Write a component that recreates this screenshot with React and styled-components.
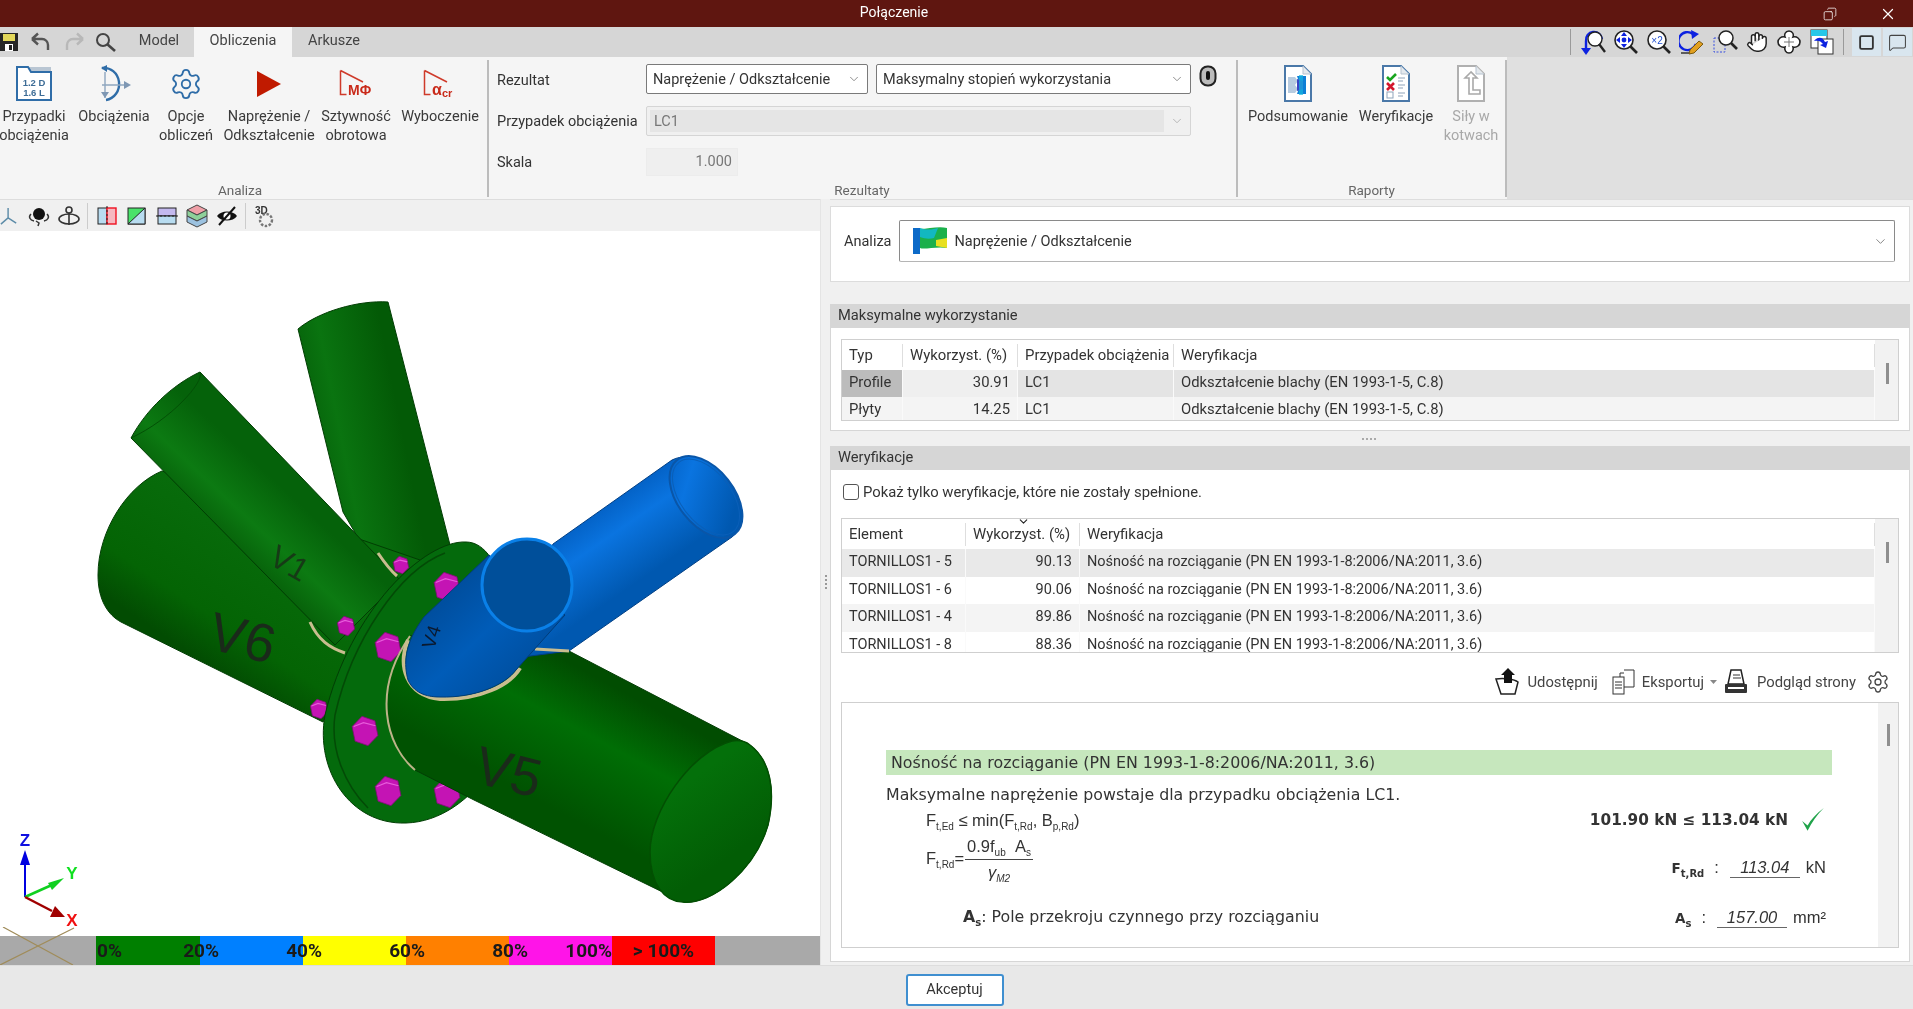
import React from 'react';
import styled, { createGlobalStyle } from 'styled-components';
import { ChevronDown, Settings, Hand, Copy, X, MessageSquare, Square } from 'lucide-react';

const Global = createGlobalStyle`
  html, body { margin: 0; padding: 0; overflow: hidden; background: #e8e8e8; }
  * { box-sizing: border-box; }
`;
const Page = styled.div`
  width: 1913px; height: 1009px; display: flex; flex-direction: column; overflow: hidden;
  font-family: Roboto, "Open Sans", sans-serif; font-size: 14.5px; color: #333; background: #e8e8e8;
  filter: blur(0.3px);
`;
const TitleBar = styled.header`
  height: 27px; flex: none; background: #5f1610; color: #fff; position: relative;
  display: flex; align-items: center; justify-content: center; padding: 0 125px 4px 0; font-size: 14px;
`;
const WindowButtons = styled.div`
  position: absolute; right: 16px; top: 0; height: 27px; display: flex; align-items: center; gap: 42px;
`;
const TabRow = styled.nav`
  height: 30px; flex: none; background: #d6d6d6; display: flex; align-items: stretch; padding-right: 0;
`;
const QuickBtn = styled.span`
  width: ${p => p.$w}px; display: flex; align-items: center; justify-content: center; flex: none;
`;
const Tab = styled.div`
  width: ${p => p.$w}px; display: flex; align-items: center; justify-content: center; flex: none; padding-bottom: 4px;
  background: ${p => p.$active ? '#f5f5f5' : 'transparent'}; font-size: 14.5px; color: #444;
`;
const TabSpacer = styled.div` flex: 1; `;
const ToolDivider = styled.span`
  width: 1px; margin: 2px 0; background: #9a9a9a; flex: none;
`;
const ToggleBtn = styled.span`
  width: 29px; margin: 1px 1px; background: #d9e6ef; display: flex; align-items: center; justify-content: center; flex: none;
`;
const RibbonBand = styled.div`
  height: 142px; flex: none; background: #e0e0e0; display: flex;
`;
const Ribbon = styled.section`
  width: 1507px; background: #f5f5f5; display: flex; padding: 3px 0 2px;
`;
const RibbonGroup = styled.div`
  width: ${p => p.$w}px; flex: none; display: flex; flex-direction: column; border-right: 2px solid #bcbcbc;
`;
const GroupBody = styled.div`
  flex: 1; display: flex; padding-left: ${p => p.$pl || 0}px;
`;
const GroupBodyColumn = styled.div`
  flex: 1; display: flex; flex-direction: column; padding: 4px 0 0 8px;
`;
const GroupLabel = styled.div`
  height: 16px; line-height: 19px; text-align: center; font-size: 13.5px; color: #666;
  padding-right: ${p => p.$pr || 0}px;
`;
const RibbonBtn = styled.div`
  width: ${p => p.$w}px; margin-left: ${p => p.$ml || 0}px; flex: none; display: flex; flex-direction: column; align-items: center;
  color: ${p => p.$off ? '#a8a8a8' : '#3a3a3a'}; white-space: nowrap; text-align: center; line-height: 19px;
`;
const IconSlot = styled.div`
  height: 37px; margin-top: 5px; margin-bottom: 5px; display: flex; align-items: center; justify-content: center;
`;
const FieldRow = styled.div`
  display: flex; align-items: center; margin-bottom: ${p => p.$mb}px; height: ${p => p.$h}px;
`;
const FieldLabel = styled.div`
  width: 149px; flex: none; color: #333; padding-top: ${p => p.$pt || 0}px;
`;
const Combo = styled.div`
  width: ${p => p.$w}px; margin-left: ${p => p.$ml || 0}px; height: 100%; border: 1px solid ${p => p.$off ? '#d5d5d5' : '#7a7a7a'}; border-radius: 2px;
  background: ${p => p.$off ? '#f0f0f0' : '#fff'}; color: ${p => p.$off ? '#777' : '#333'}; display: flex; align-items: center; flex: none;
  padding: ${p => p.$off ? '3px 6px 3px 3px' : '0 6px'}; justify-content: space-between;
`;
const ComboFill = styled.div`
  flex: 1; height: 100%; background: #e5e5e5; display: flex; align-items: center; padding-left: 4px; margin-right: 6px;
`;
const ScaleInput = styled.div`
  width: 92px; height: 28px; border: 1px solid #ececec; background: #efefef; color: #777; text-align: right;
  padding: 3px 5px; line-height: 20px;
`;
const Pin = styled.span` margin-left: 8px; margin-top: -6px; display: flex; `;

const Main = styled.main`
  flex: 1; display: flex; min-height: 0;
`;
const LeftPane = styled.div`
  width: 820px; flex: none; display: flex; flex-direction: column; background: #fff;
`;
const ViewToolbar = styled.div`
  height: 32px; flex: none; background: #f0f0f0; border-top: 1px solid #ddd; display: flex; align-items: center;
`;
const ViewTool = styled.span`
  width: ${p => p.$w || 30}px; margin-left: ${p => p.$ml || 0}px; display: flex; justify-content: center; flex: none;
`;
const ToolSep = styled.span`
  width: 1px; height: 26px; background: #ccc; margin: 0 3px; flex: none;
`;
const Viewport = styled.div`
  flex: 1; background: #fff; min-height: 0;
`;
const ModelSvg = styled.svg`
  display: block;
`;
const Legend = styled.div`
  height: 29px; flex: none; display: flex; background: #a9a9a9; position: relative; font-weight: 700; font-size: 19px; color: #1a1a1a;
`;
const LegendCross = styled.svg`
  position: absolute; left: 0; top: -9px;
`;
const LegendSeg = styled.div`
  width: ${p => p.$w}px; flex: none; background: ${p => p.$c}; position: relative; display: flex; align-items: center; line-height: 29px;
`;
const LegendStart = styled.span`
  padding-left: 1px;
`;
const LegendMark = styled.span`
  position: absolute; z-index: 1; top: 0; right: ${p => p.$r}px;
`;
const LegendCenter = styled.span`
  width: 100%; text-align: center;
`;
const Splitter = styled.div`
  width: 10px; flex: none; display: flex; align-items: center; justify-content: center; background: #f0f0f0; border-left: 1px solid #e4e4e4;
`;
const Grip = styled.div`
  width: 2px; height: 14px; background: repeating-linear-gradient(#999 0 2px, transparent 2px 4px);
`;
const RightPane = styled.div`
  flex: 1; min-width: 0; background: #f0f0f0; display: flex; flex-direction: column; padding: 6px 3px 4px 0;
  border-top: 1px solid #ddd;
`;
const AnalysisCard = styled.div`
  height: 76px; flex: none; background: #fff; border: 1px solid #dcdcdc; display: flex; align-items: center; padding: 0 14px 6px 13px; gap: 7px;
`;
const AnalysisCombo = styled.div`
  flex: 1; height: 42px; border: 1px solid #8a8a8a; border-bottom-color: #b5b5b5; border-radius: 2px; display: flex; align-items: center; padding: 0 6px 0 12px; background: #fff;
`;
const AnalysisText = styled.span` flex: 1; padding-left: 7px; `;
const Panel = styled.section`
  background: #fff; border: 1px solid #d6d6d6; display: flex; flex-direction: column; margin-top: ${p => p.$mt}px;
  height: ${p => p.$h}px; flex: none;
`;
const PanelHead = styled.div`
  height: 23px; flex: none; background: #d6d6d6; padding-left: 7px; line-height: 21px; color: #333; font-size: 14.7px;
`;
const HSplit = styled.div`
  height: 15px; flex: none; display: flex; align-items: center; justify-content: center;
`;
const HGrip = styled.div`
  width: 16px; height: 2px; background: repeating-linear-gradient(90deg, #aaa 0 2px, transparent 2px 4px);
`;
const TableBox = styled.div`
  margin: ${p => p.$m}; height: ${p => p.$h}px; border: 1px solid #cfcfcf; display: flex; overflow: hidden; flex: none; background: #fff;
  font-size: ${p => p.$fs || 14.5}px;
`;
const TableGrid = styled.div`
  flex: 1; min-width: 0; overflow: hidden; display: flex; flex-direction: column;
`;
const TRow = styled.div`
  display: grid; grid-template-columns: ${p => p.$cols}; height: ${p => p.$h}px; flex: none; align-items: stretch;
  background: ${p => p.$bg || '#fff'};
`;
const TCell = styled.div`
  padding: 0 7px; line-height: 25px; white-space: nowrap; overflow: hidden; text-align: ${p => p.$right ? 'right' : 'left'};
  border-right: 1px solid #fafafa; background: ${p => p.$bg || 'transparent'}; position: relative;
`;
const HeadCell = styled(TCell)`
  border-right: 1px solid #dedede; margin: 4px 0 3px; line-height: 22px; overflow: visible; font-size: 14.9px;
`;
const SortMark = styled.span`
  position: absolute; top: -8px; left: 50%; margin-left: -6px; display: flex;
`;
const ScrollTrack = styled.div`
  width: ${p => p.$w || 23}px; flex: none; background: #f2f2f2; position: relative;
`;
const ScrollThumb = styled.div`
  position: absolute; width: 3px; left: ${p => p.$l}px; top: ${p => p.$t}px; height: ${p => p.$h}px; background: #8f8f8f;
`;
const CheckRow = styled.label`
  display: flex; align-items: center; gap: 4px; margin: 14px 0 18px 12px; height: 16px; flex: none; font-size: 14.8px;
`;
const CheckBox = styled.span`
  width: 16px; height: 16px; border: 1px solid #555; border-radius: 3px; background: #fff; flex: none;
`;
const ActionBar = styled.div`
  height: 49px; flex: none; display: flex; align-items: center; justify-content: flex-end; padding-right: 19px; padding-top: 8px;
  font-size: 14.8px;
`;
const Action = styled.span`
  display: flex; align-items: center; gap: ${p => p.$gap}px; margin-left: ${p => p.$ml || 0}px; color: #444;
`;
const Report = styled.div`
  margin: 0 10px 0 10px; height: 246px; flex: none; border: 1px solid #cfcfcf; display: flex; overflow: hidden;
`;
const ReportInner = styled.div`
  flex: 1; min-width: 0; padding: 47px 46px 0 44px;
  font-family: "DejaVu Sans", Verdana, sans-serif; color: #333;
`;
const GreenBar = styled.div`
  height: 25px; background: #c6e7bd; line-height: 25px; padding-left: 5px; font-size: 15.85px; white-space: nowrap;
`;
const Message = styled.div`
  height: 20px; margin-top: 10px; line-height: 20px; font-size: 15.8px; white-space: nowrap;
`;
const FormulaRow = styled.div`
  display: flex; justify-content: space-between; align-items: center; height: ${p => p.$h}px; margin-top: ${p => p.$mt || 0}px;
  padding: 0 6px 0 ${p => p.$pl}px; font-family: "Liberation Sans", Arial, sans-serif; font-size: 16.5px;
`;
const Inline = styled.span`
  display: inline-block; white-space: nowrap; padding-top: ${p => p.$pt || 0}px;
`;
const Description = styled(Inline)`
  font-family: "DejaVu Sans", Verdana, sans-serif; font-size: 15.8px;
`;
const BoldResult = styled.span`
  font-weight: 700; font-family: "DejaVu Sans", Verdana, sans-serif; font-size: 15.3px; display: flex; align-items: center; gap: 12px;
`;
const Sub = styled.sub`
  font-size: 10px; line-height: 0; vertical-align: -4px;
`;
const Fraction = styled.span`
  display: inline-flex; flex-direction: column; align-items: center; margin-left: 1px; vertical-align: middle;
`;
const Numer = styled.span`
  border-bottom: 1.5px solid #444; padding: 0 2px 3px; line-height: 19px;
`;
const Denom = styled.span`
  line-height: 22px; padding-top: 1px; font-style: italic;
`;
const QtyName = styled.b`
  margin-right: 10px; font-family: "DejaVu Sans", Verdana, sans-serif; font-size: 13.5px;
`;
const QtyValue = styled.span`
  display: inline-block; width: 70px; border-bottom: 1px solid #666; font-style: italic; text-align: center; margin: 0 6px 0 11px; line-height: 20px; padding-top: 2px;
`;
const Bottom = styled.footer`
  height: 44px; flex: none; background: #e8e8e8; border-top: 1px solid #ddd; display: flex; align-items: center; justify-content: center; padding: 4px 4px 0 0;
`;
const OkButton = styled.div`
  width: 98px; height: 32px; background: #fff; border: 2px solid #3f8fd0; border-radius: 3px; display: flex; align-items: center; justify-content: center; color: #333;
`;

/* ---------- icons ---------- */
const IconCases = () => (
  <svg width="38" height="37" viewBox="0 0 38 37">
    <path d="M14 2h22v9H14z" fill="#b9c6d3" />
    <path d="M2 2h11l3 5h20v28H2z" fill="#fff" stroke="#2f6da8" strokeWidth="2" />
    <text x="19" y="21" textAnchor="middle" fontSize="9.5" fontWeight="700" fill="#3d6c96" fontFamily="Liberation Sans">1.2 D</text>
    <text x="19" y="31" textAnchor="middle" fontSize="9.5" fontWeight="700" fill="#3d6c96" fontFamily="Liberation Sans">1.6 L</text>
  </svg>
);
const IconLoads = () => (
  <svg width="36" height="38" viewBox="0 0 36 38">
    <path d="M4 3a15 16 0 0 1 4 32" fill="none" stroke="#2f6da8" strokeWidth="2.4" transform="translate(2 0)" />
    <path d="M5 3l6-3v7z" fill="#2f6da8" />
    <path d="M6 20h24M9 7v26" stroke="#8ea6bf" strokeWidth="1.4" />
    <path d="M28 16l7 4-7 4zM5 27h8l-4 6z" fill="#7e97b3" />
  </svg>
);
const IconPlay = () => <svg width="26" height="28" viewBox="0 0 26 28"><path d="M1 1l24 13L1 27z" fill="#c01a00" /></svg>;
const IconRedTri = ({ children }) => (
  <svg width="34" height="30" viewBox="0 0 34 30">
    <path d="M1.5 1.5v24h6M1.5 1.5L24 13" fill="none" stroke="#cf3a2a" strokeWidth="1.5" />
    {children}
  </svg>
);
const RedMark = styled.text`
  fill: #c92a1a; font-family: "Liberation Sans", sans-serif; font-weight: 700;
`;
const IconDoc = ({ color = '#4a78a8', children }) => (
  <svg width="30" height="37" viewBox="0 0 30 37">
    <path d="M2 1h18l8 8v27H2z" fill="#fff" stroke={color} strokeWidth="2" />
    <path d="M20 1v8h8" fill="#e4e9ee" stroke="#b7c3cf" strokeWidth="1" />
    {children}
  </svg>
);
const IconSummary = () => (
  <IconDoc>
    <path d="M5 12h7l3 4-3 4 3 4-3 4H5z" fill="#b7cbe0" />
    <path d="M14 11h9v18h-9l3-9z" fill="#0e7fd6" />
    <path d="M14 14l6 2v8l-6 2z" fill="#3a45c4" />
    <path d="M16 10h4v20h-4z" fill="#17b6e0" opacity=".7" />
  </IconDoc>
);
const IconChecks = () => (
  <IconDoc>
    <path d="M6 12l3 3 6-6" fill="none" stroke="#19a51f" strokeWidth="2.6" />
    <path d="M17 13h7M17 16h5" stroke="#8fa4ba" strokeWidth="1.2" />
    <path d="M6 18l7 7M13 18l-7 7" stroke="#d3172d" strokeWidth="2.6" />
    <path d="M17 20h7M17 23h5M17 28h7M17 31h5" stroke="#8fa4ba" strokeWidth="1.2" />
    <rect x="6" y="27" width="6" height="6" fill="#fff" stroke="#8fa4ba" />
  </IconDoc>
);
const IconAnchor = () => (
  <IconDoc color="#b0b0b0">
    <path d="M15 7l-6 6h4v16h11v-4h-7V13h4z" fill="none" stroke="#a9a9a9" strokeWidth="1.6" />
  </IconDoc>
);
const Lens = ({ children, stroke = '#222' }) => (
  <svg width="26" height="26" viewBox="0 0 26 26">
    <circle cx="11" cy="11" r="9" fill="#fff" stroke={stroke} strokeWidth="1.6" />
    <path d="M17 17l7 7" stroke={stroke} strokeWidth="2.6" />
    {children}
  </svg>
);
const ZoomTools = () => (
  <>
    <QuickBtn $w={33}><svg width="26" height="26" viewBox="0 0 26 26"><path d="M6 22V12a8 8 0 0 1 16-2" fill="none" stroke="#0d22e0" strokeWidth="2.4" /><path d="M1 19h10l-5 7z" fill="#0d22e0" /><circle cx="15" cy="10" r="7" fill="#fff" stroke="#222" strokeWidth="1.4" /><path d="M19 15l6 8" stroke="#222" strokeWidth="2.4" /></svg></QuickBtn>
    <QuickBtn $w={33}><Lens><path d="M11 3l3 4H8zM11 19l-3-4h6zM3 11l4-3v6zM19 11l-4 3V8z" fill="#0d22e0" /><circle cx="11" cy="11" r="2.4" fill="#0d22e0" /></Lens></QuickBtn>
    <QuickBtn $w={33}><Lens><text x="11" y="15" textAnchor="middle" fontSize="10" fill="#2050d0" fontFamily="Liberation Sans">×2</text></Lens></QuickBtn>
    <QuickBtn $w={33}><svg width="26" height="26" viewBox="0 0 26 26"><path d="M17 4a9 9 0 1 0 3 10" fill="none" stroke="#0d22e0" strokeWidth="2.4" transform="translate(-3 1)" /><path d="M12 1l8 4-7 5z" fill="#0d22e0" /><path d="M2 24h11" stroke="#333" strokeWidth="1.5" /><path d="M11 21l9-9 4 3-9 9-5 1z" fill="#e2a020" stroke="#7a5a10" /></svg></QuickBtn>
    <QuickBtn $w={33}><svg width="26" height="26" viewBox="0 0 26 26"><rect x="2" y="9" width="11" height="14" fill="none" stroke="#3a50e0" strokeDasharray="2 1.5" /><circle cx="14" cy="9" r="7" fill="#fff" stroke="#222" strokeWidth="1.5" /><path d="M19 14l6 6" stroke="#222" strokeWidth="2.6" /></svg></QuickBtn>
    <QuickBtn $w={31}><Hand size={22} color="#222" strokeWidth={1.6} fill="#fff" /></QuickBtn>
    <QuickBtn $w={33}><svg width="26" height="26" viewBox="0 0 26 26"><path d="M13 2c4 0 5 4 4 6 4-1 7 2 7 5s-3 6-7 5c1 3-1 6-4 6s-5-3-4-6c-4 1-7-2-7-5s3-6 7-5c-1-2 0-6 4-6z" fill="#fff" stroke="#222" strokeWidth="1.6" /><path d="M13 8v10M8 13h10" stroke="#777" /></svg></QuickBtn>
    <QuickBtn $w={33}><svg width="24" height="26" viewBox="0 0 24 26"><rect x="1" y="1" width="16" height="18" fill="#fff" stroke="#333" /><rect x="1" y="1" width="16" height="6" fill="#26c7e8" /><rect x="8" y="10" width="15" height="15" fill="#fff" stroke="#333" /><path d="M4 12c4-5 9-4 11 1l3-1-2 7-6-3 3-1c-2-3-5-4-9-3z" fill="#0d22e0" /></svg></QuickBtn>
  </>
);
const IconSave = () => (
  <svg width="18" height="20" viewBox="0 0 18 20"><path d="M0 1h18v18H0z" fill="#262626" /><rect x="3" y="2" width="12" height="7" fill="#e3d85a" /><rect x="5" y="12" width="8" height="7" fill="#fff" /><rect x="9" y="13" width="3" height="5" fill="#222" /></svg>
);
const IconUndo = ({ off }) => (
  <svg width="22" height="20" viewBox="0 0 22 20" style={off ? { transform: 'scaleX(-1)' } : undefined}>
    <path d="M3 7h10a6 6 0 0 1 6 6v5M3 7l6-5.500M3 7l6 5.500" fill="none" stroke={off ? '#b8b8b8' : '#555'} strokeWidth="2.400" />
  </svg>
);
const IconSearch = () => (
  <svg width="22" height="20" viewBox="0 0 22 20"><circle cx="8" cy="8" r="6" fill="none" stroke="#444" strokeWidth="2" /><path d="M12 12l8 7" stroke="#444" strokeWidth="2.600" /></svg>
);
const ViewIcons = [
  <svg key="a" width="20" height="20" viewBox="0 0 20 20"><path d="M9 1v11L1 19M9 12l9 6" fill="none" stroke="#5d8ca8" strokeWidth="1.600" /></svg>,
  <svg key="b" width="24" height="22" viewBox="0 0 24 22"><path d="M4 9C1 12 3 15 7 16M20 9c3 3 1 6-3 7M9 16l3 2-1 3" fill="none" stroke="#333" strokeWidth="1.500" /><circle cx="12" cy="9" r="6" fill="#111" /></svg>,
  <svg key="c" width="24" height="22" viewBox="0 0 24 22"><circle cx="12" cy="5" r="3" fill="none" stroke="#333" strokeWidth="1.600" /><path d="M12 8v12" stroke="#333" strokeWidth="1.600" /><ellipse cx="12" cy="14" rx="10" ry="5" fill="none" stroke="#333" strokeWidth="1.600" /></svg>,
];
const ViewIcons2 = [
  <svg key="d" width="22" height="22" viewBox="0 0 22 22"><rect x="2" y="3" width="9" height="16" fill="#b8dcf0" stroke="#222" /><rect x="11" y="3" width="9" height="16" fill="#f6b8c0" stroke="#f01020" strokeWidth="1.400" /><path d="M11 1v20" stroke="#222" strokeDasharray="2 2" /></svg>,
  <svg key="e" width="22" height="22" viewBox="0 0 22 22"><rect x="2" y="3" width="17" height="16" fill="#49e26a" stroke="#222" /><path d="M2 19L19 3v16z" fill="#b8dcf0" stroke="#222" /></svg>,
  <svg key="f" width="22" height="22" viewBox="0 0 22 22"><rect x="2" y="3" width="18" height="8" fill="#c3b9ee" stroke="#222" /><rect x="2" y="11" width="18" height="8" fill="#b8dcf0" stroke="#222" /><path d="M0 11h22" stroke="#222" strokeDasharray="2 2" /></svg>,
  <svg key="g" width="22" height="24" viewBox="0 0 22 24"><path d="M11 1l10 5-10 5L1 6z" fill="#f0a0a8" stroke="#444" /><path d="M1 6v6l10 5 10-5V6l-10 5z" fill="#8ed09a" stroke="#444" /><path d="M1 12v6l10 5 10-5v-6l-10 5z" fill="#9cc2e0" stroke="#444" /></svg>,
  <svg key="h" width="24" height="22" viewBox="0 0 24 22"><path d="M2 11c4-6 16-6 20 0-4 6-16 6-20 0z" fill="#111" /><circle cx="12" cy="11" r="3.500" fill="#fff" /><path d="M4 20L20 2" stroke="#111" strokeWidth="2" /></svg>,
];
const IconFlag = () => (
  <svg width="36" height="30" viewBox="0 0 36 30"><path d="M1 2c10 3 24-3 34 0v20C25 20 12 24 8 22v6H1z" fill="#1bb04b" /><path d="M1 2h7v26H1z" fill="#0c6ac8" /><path d="M8 2c8 3 14 1 18 0l-4 10c-4 1-9 1-14-1z" fill="#12b8c0" /><path d="M24 14l11-2v10l-11-2z" fill="#e8e020" /></svg>
);
const IconShare = () => (
  <svg width="30" height="28" viewBox="0 0 30 28"><path d="M2 11l5 15h14l3-12c-4-3-14-4-22-3z" fill="#fff" stroke="#222" strokeWidth="1.500" /><path d="M14 0l7 7h-3v8h-8V7H7z" fill="#111" /></svg>
);
const IconExport = () => (
  <svg width="24" height="26" viewBox="0 0 24 26"><rect x="1" y="8" width="11" height="17" fill="#fff" stroke="#333" /><path d="M12 1h10v17H12M8 8V4h4M3 13h7M3 16h7M3 19h7" fill="none" stroke="#333" /></svg>
);
const IconPrint = () => (
  <svg width="24" height="26" viewBox="0 0 24 26"><path d="M7 1h10l3 14H4z" fill="#fff" stroke="#222" strokeWidth="1.500" /><path d="M9 6h7M9 9h8" stroke="#333" /><rect x="1" y="15" width="22" height="9" rx="1" fill="#333" /><rect x="4" y="18" width="16" height="2" fill="#fff" /></svg>
);
const SmallCheck = () => (
  <svg width="26" height="26" viewBox="0 0 24 24"><path d="M2 13l5 9C11 14 16 7 22 1 15 6 10 12 7 17z" fill="#20a34a" /></svg>
);

/* ---------- 3D model ---------- */
const Hex = ({ x, y, r = 15 }) => {
  const pts = [0, 1, 2, 3, 4, 5].map(i => {
    const a = (Math.PI / 3) * i + 0.3;
    return `${x + r * 0.9 * Math.cos(a)},${y + r * Math.sin(a)}`;
  }).join(' ');
  return (
    <g>
      <polygon points={pts} fill="#c414b4" stroke="#7c0f72" strokeWidth="0.800" />
      <path d={`M${x - r * 0.75} ${y - r * 0.3}L${x - r * 0.1} ${y - r * 0.55}L${x + r * 0.7} ${y - r * 0.35}`} fill="none" stroke="#e75ddb" strokeWidth="1.200" />
    </g>
  );
};
const Model = () => (
  <ModelSvg width="820" height="705" viewBox="0 231 820 705">
    <defs>
      <linearGradient id="gTop" gradientUnits="userSpaceOnUse" x1="300" y1="440" x2="400" y2="420">
        <stop offset="0" stopColor="#045c08" /><stop offset=".4" stopColor="#0a7410" /><stop offset="1" stopColor="#035a06" />
      </linearGradient>
      <linearGradient id="gV6" gradientUnits="userSpaceOnUse" x1="250" y1="520" x2="170" y2="640">
        <stop offset="0" stopColor="#086c0c" /><stop offset=".7" stopColor="#046404" /><stop offset="1" stopColor="#024c02" />
      </linearGradient>
      <linearGradient id="gV1" gradientUnits="userSpaceOnUse" x1="215" y1="565" x2="285" y2="490">
        <stop offset="0" stopColor="#034f04" /><stop offset=".55" stopColor="#0c7a12" /><stop offset="1" stopColor="#05620a" />
      </linearGradient>
      <linearGradient id="gV5" gradientUnits="userSpaceOnUse" x1="620" y1="690" x2="555" y2="810">
        <stop offset="0" stopColor="#014d01" /><stop offset=".4" stopColor="#006e05" /><stop offset="1" stopColor="#005201" />
      </linearGradient>
      <linearGradient id="gEnd" gradientUnits="userSpaceOnUse" x1="690" y1="780" x2="740" y2="850">
        <stop offset="0" stopColor="#04700a" /><stop offset="1" stopColor="#025d05" />
      </linearGradient>
      <linearGradient id="gBack" gradientUnits="userSpaceOnUse" x1="600" y1="490" x2="655" y2="570">
        <stop offset="0" stopColor="#0058b8" /><stop offset=".45" stopColor="#0a74e0" /><stop offset="1" stopColor="#0058b0" />
      </linearGradient>
      <linearGradient id="gFront" gradientUnits="userSpaceOnUse" x1="440" y1="590" x2="525" y2="680">
        <stop offset="0" stopColor="#004c9a" /><stop offset=".5" stopColor="#005cb8" /><stop offset="1" stopColor="#004e9e" />
      </linearGradient>
    </defs>
    <path d="M298,329 C318,312 358,300 388,302 L450,545 L400,610 L343,512 Z" fill="url(#gTop)" stroke="#023d04" />
    <path d="M162,471 C128,485 98,530 98,575 C98,600 108,615 121,622 L323,722 L420,560 Z" fill="url(#gV6)" stroke="#023d04" />
    <path d="M200,372 C172,385 146,410 131,438 L335,645 L400,580 Z" fill="url(#gV1)" stroke="#023d04" />
    <path d="M200,372 C205,382 170,420 131,438" fill="none" stroke="#035006" />
    <path d="M310,622 C318,640 330,648 345,653 M378,553 C384,562 390,570 397,576" fill="none" stroke="#c9bd8f" strokeWidth="3" />
    <text x="0" y="0" transform="translate(267 563) rotate(30)" fontSize="32" fontFamily="Liberation Sans" fill="#163a16">V1</text>
    <text x="0" y="0" transform="translate(206 648) rotate(14)" fontSize="54" fontFamily="Liberation Sans" fill="#1a2a1a">V6</text>
    <Hex x={401} y={565} r={9} />
    <Hex x={346} y={626} r={10} />
    <Hex x={319} y={709} r={10} />
    <path d="M466,542 C425,540 350,610 325,715 C315,770 350,825 406,823 C440,822 470,800 490,770 L505,600 C500,565 485,542 466,542 Z" fill="#046a0c" stroke="#023d04" />
    <path d="M445,553 C400,570 352,640 335,715 C330,750 345,785 368,808" fill="none" stroke="#034a06" strokeWidth="1.500" />
    <Hex x={447} y={587} />
    <Hex x={388} y={647} />
    <Hex x={365} y={731} />
    <Hex x={388} y={791} />
    <Hex x={447} y={793} />
    <path d="M569,651 L750,745 C770,760 776,790 768,825 C755,870 712,905 683,902 L474,800 L415,770 C385,745 372,690 410,636 L470,630 Z" fill="url(#gV5)" stroke="#023d04" />
    <path d="M415,770 C385,745 372,690 410,636" fill="none" stroke="#bdb489" strokeWidth="2" />
    <path d="M732,741 C690,752 650,812 650,852 C650,885 665,902 683,902 C712,905 755,870 768,825 C776,790 770,760 750,745 C745,741 738,740 732,741 Z" fill="url(#gEnd)" stroke="#034f03" strokeWidth="1.500" />
    <text x="0" y="0" transform="translate(472 782) rotate(14)" fontSize="54" fontFamily="Liberation Sans" fill="#1a2a1a">V5</text>
    <path d="M553,544 L672,460 C692,450 722,465 735,495 C743,515 741,530 732,537 L569,651 L500,660 Z" fill="url(#gBack)" stroke="#003f85" />
    <ellipse cx="706" cy="497" rx="28" ry="47" transform="rotate(-38 706 497)" fill="url(#gBack)" stroke="#0a56a8" strokeWidth="2" />
    <ellipse cx="706" cy="497" rx="25" ry="44" transform="rotate(-38 706 497)" fill="none" stroke="#0a5fb8" strokeWidth="1" />
    <path d="M535,649 L569,651" stroke="#c9bd8f" strokeWidth="3" />
    <path d="M408,640 C398,665 405,695 440,699 C480,700 510,685 520,668" fill="none" stroke="#c9bd8f" strokeWidth="4" />
    <path d="M489,555 L424,617 C403,645 404,665 408,680 C415,695 430,697 440,697 C475,698 505,685 516,670 L565,615 Z" fill="url(#gFront)" stroke="#003c7a" />
    <ellipse cx="527" cy="585" rx="45" ry="46" fill="#004f9a" stroke="#0a80e8" strokeWidth="3" />
    <text x="0" y="0" transform="translate(434 650) rotate(-72)" fontSize="19" fontFamily="Liberation Sans" fill="#0a1a30">V4</text>
    <path d="M25 897V858" stroke="#0000e0" strokeWidth="2" /><path d="M25 850l5 15H20z" fill="#0000e0" />
    <path d="M25 897L54 884" stroke="#10d020" strokeWidth="2.500" /><path d="M64 878l-12 12-4-7z" fill="#10d020" />
    <path d="M25 897L52 911" stroke="#a00000" strokeWidth="2.500" /><path d="M65 917l-15 0 5-11z" fill="#a00000" />
    <text x="25" y="846" textAnchor="middle" fontSize="17" fontWeight="700" fill="#1010e0" fontFamily="Liberation Sans">Z</text>
    <text x="72" y="879" textAnchor="middle" fontSize="17" fontWeight="700" fill="#10e020" fontFamily="Liberation Sans">Y</text>
    <text x="72" y="926" textAnchor="middle" fontSize="17" fontWeight="700" fill="#f01010" fontFamily="Liberation Sans">X</text>
  </ModelSvg>
);

/* ---------- data ---------- */
const maxCols = '61px 115px 156px 1fr';
const maxRows = [
  { a: 'Profile', b: '30.91', c: 'LC1', d: 'Odkształcenie blachy (EN 1993-1-5, C.8)', bg: '#e4e4e4', fbg: '#bcbcbc', mbg: '#efefef' },
  { a: 'Płyty', b: '14.25', c: 'LC1', d: 'Odkształcenie blachy (EN 1993-1-5, C.8)', bg: '#f4f4f4' },
];
const verCols = '124px 114px 1fr';
const verText = 'Nośność na rozciąganie (PN EN 1993-1-8:2006/NA:2011, 3.6)';
const verRows = [
  { a: 'TORNILLOS1 - 5', b: '90.13', bg: '#e9e9e9' },
  { a: 'TORNILLOS1 - 6', b: '90.06', bg: '#fff' },
  { a: 'TORNILLOS1 - 4', b: '89.86', bg: '#f4f4f4' },
  { a: 'TORNILLOS1 - 8', b: '88.36', bg: '#fff' },
];
const legend = [
  { c: '#007f00', w: 104, start: '0%', mark: '20%', r: -19 },
  { c: '#0080ff', w: 103, mark: '40%', r: -19 },
  { c: '#ffff00', w: 103, mark: '60%', r: -19 },
  { c: '#ff8000', w: 103, mark: '80%', r: -19 },
  { c: '#ff14e8', w: 103, mark: '100%', r: 0 },
  { c: '#ff0000', w: 103, center: '> 100%' },
];

export default function App() {
  return (
    <Page>
      <Global />
      <TitleBar>
        Połączenie
        <WindowButtons>
          <Copy size={14} color="#fff" strokeWidth={1.3} style={{ transform: 'scaleX(-1)' }} />
          <X size={18} color="#fff" strokeWidth={1.6} />
        </WindowButtons>
      </TitleBar>
      <TabRow>
        <QuickBtn $w={18}><IconSave /></QuickBtn>
        <QuickBtn $w={44}><IconUndo /></QuickBtn>
        <QuickBtn $w={26}><IconUndo off /></QuickBtn>
        <QuickBtn $w={36}><IconSearch /></QuickBtn>
        <Tab $w={70}>Model</Tab>
        <Tab $w={98} $active>Obliczenia</Tab>
        <Tab $w={84}>Arkusze</Tab>
        <TabSpacer />
        <ToolDivider />
        <QuickBtn $w={5} />
        <ZoomTools />
        <QuickBtn $w={5} />
        <ToolDivider />
        <QuickBtn $w={7} />
        <ToggleBtn><Square size={17} color="#333" strokeWidth={2.6} /></ToggleBtn>
        <ToggleBtn><MessageSquare size={19} color="#444" strokeWidth={1.3} /></ToggleBtn>
      </TabRow>
      <RibbonBand>
        <Ribbon>
          <RibbonGroup $w={489}>
            <GroupBody>
              <RibbonBtn $w={66} $ml={1}><IconSlot><IconCases /></IconSlot>Przypadki<br />obciążenia</RibbonBtn>
              <RibbonBtn $w={72} $ml={11}><IconSlot><IconLoads /></IconSlot>Obciążenia</RibbonBtn>
              <RibbonBtn $w={56} $ml={8}><IconSlot><Settings size={34} color="#2f6da8" strokeWidth={1.3} /></IconSlot>Opcje<br />obliczeń</RibbonBtn>
              <RibbonBtn $w={94} $ml={8}><IconSlot><IconPlay /></IconSlot>Naprężenie /<br />Odkształcenie</RibbonBtn>
              <RibbonBtn $w={70} $ml={5}><IconSlot><IconRedTri><RedMark x="9" y="26" fontSize="14">MΦ</RedMark></IconRedTri></IconSlot>Sztywność<br />obrotowa</RibbonBtn>
              <RibbonBtn $w={84} $ml={7}><IconSlot><IconRedTri><RedMark x="9" y="26" fontSize="16">α</RedMark><RedMark x="19" y="28" fontSize="11">cr</RedMark></IconRedTri></IconSlot>Wyboczenie</RibbonBtn>
            </GroupBody>
            <GroupLabel $pr={7}>Analiza</GroupLabel>
          </RibbonGroup>
          <RibbonGroup $w={749}>
            <GroupBodyColumn>
              <FieldRow $h={30} $mb={12}>
                <FieldLabel $pt={2}>Rezultat</FieldLabel>
                <Combo $w={222}>Naprężenie / Odkształcenie<ChevronDown size={14} color="#777" strokeWidth={1.4} /></Combo>
                <Combo $w={315} $ml={8}>Maksymalny stopień wykorzystania<ChevronDown size={14} color="#777" strokeWidth={1.4} /></Combo>
                <Pin><svg width="18" height="22" viewBox="0 0 18 22"><rect x="1.500" y="1.500" width="15" height="19" rx="7" fill="#bbb" stroke="#222" strokeWidth="2" /><rect x="7" y="6" width="4" height="9" rx="2" fill="#111" /></svg></Pin>
              </FieldRow>
              <FieldRow $h={30} $mb={12}>
                <FieldLabel>Przypadek obciążenia</FieldLabel>
                <Combo $w={545} $off><ComboFill>LC1</ComboFill><ChevronDown size={14} color="#aaa" strokeWidth={1.4} /></Combo>
              </FieldRow>
              <FieldRow $h={28} $mb={0}>
                <FieldLabel>Skala</FieldLabel>
                <ScaleInput>1.000</ScaleInput>
              </FieldRow>
            </GroupBodyColumn>
            <GroupLabel $pr={1}>Rezultaty</GroupLabel>
          </RibbonGroup>
          <RibbonGroup $w={269}>
            <GroupBody $pl={9}>
              <RibbonBtn $w={102}><IconSlot><IconSummary /></IconSlot>Podsumowanie</RibbonBtn>
              <RibbonBtn $w={80} $ml={7}><IconSlot><IconChecks /></IconSlot>Weryfikacje</RibbonBtn>
              <RibbonBtn $w={60} $ml={5} $off><IconSlot><IconAnchor /></IconSlot>Siły w<br />kotwach</RibbonBtn>
            </GroupBody>
            <GroupLabel>Raporty</GroupLabel>
          </RibbonGroup>
        </Ribbon>
      </RibbonBand>
      <Main>
        <LeftPane>
          <ViewToolbar>
            <ViewTool $w={18}>{ViewIcons[0]}</ViewTool>
            <ViewTool $ml={6}>{ViewIcons[1]}</ViewTool>
            <ViewTool>{ViewIcons[2]}</ViewTool>
            <ToolSep />
            {ViewIcons2.map((ic, i) => <ViewTool key={i} $ml={i === 0 ? 1 : 0}>{ic}</ViewTool>)}
            <ToolSep />
            <ViewTool><svg width="24" height="24" viewBox="0 0 24 24"><text x="3" y="10" fontSize="10" fontWeight="700" fill="#333" fontFamily="Liberation Sans">3D</text><circle cx="14" cy="16" r="6" fill="none" stroke="#777" strokeWidth="2.400" strokeDasharray="2.500 1.500" /></svg></ViewTool>
          </ViewToolbar>
          <Viewport><Model /></Viewport>
          <Legend>
            <LegendCross width="76" height="38" viewBox="0 0 76 38"><path d="M3 0l70 38M74 1L0 38" stroke="#a08c5a" strokeWidth="1.200" /></LegendCross>
            <LegendSeg $w={96} $c="transparent" />
            {legend.map((s, i) => (
              <LegendSeg key={i} $w={s.w} $c={s.c}>
                {s.start && <LegendStart>{s.start}</LegendStart>}
                {s.mark && <LegendMark $r={s.r}>{s.mark}</LegendMark>}
                {s.center && <LegendCenter>{s.center}</LegendCenter>}
              </LegendSeg>
            ))}
          </Legend>
        </LeftPane>
        <Splitter><Grip /></Splitter>
        <RightPane>
          <AnalysisCard>
            Analiza
            <AnalysisCombo>
              <IconFlag />
              <AnalysisText>Naprężenie / Odkształcenie</AnalysisText>
              <ChevronDown size={15} color="#777" strokeWidth={1.4} />
            </AnalysisCombo>
          </AnalysisCard>
          <Panel $mt={22} $h={127}>
            <PanelHead>Maksymalne wykorzystanie</PanelHead>
            <TableBox $m="11px 10px 0 10px" $h={82} $fs={14.8}>
              <TableGrid>
                <TRow $cols={maxCols} $h={30}>
                  <HeadCell>Typ</HeadCell>
                  <HeadCell>Wykorzyst. (%)</HeadCell>
                  <HeadCell>Przypadek obciążenia</HeadCell>
                  <HeadCell>Weryfikacja</HeadCell>
                </TRow>
                {maxRows.map(r => (
                  <TRow key={r.a} $cols={maxCols} $h={27} $bg={r.bg}>
                    <TCell $bg={r.fbg}>{r.a}</TCell>
                    <TCell $right $bg={r.mbg}>{r.b}</TCell>
                    <TCell>{r.c}</TCell>
                    <TCell>{r.d}</TCell>
                  </TRow>
                ))}
              </TableGrid>
              <ScrollTrack><ScrollThumb $l={11} $t={23} $h={21} /></ScrollTrack>
            </TableBox>
          </Panel>
          <HSplit><HGrip /></HSplit>
          <Panel $mt={0} $h={516}>
            <PanelHead>Weryfikacje</PanelHead>
            <CheckRow><CheckBox />Pokaż tylko weryfikacje, które nie zostały spełnione.</CheckRow>
            <TableBox $m="0 10px 0 10px" $h={135}>
              <TableGrid>
                <TRow $cols={verCols} $h={30}>
                  <HeadCell>Element</HeadCell>
                  <HeadCell>
                    <SortMark><ChevronDown size={13} color="#222" strokeWidth={2} /></SortMark>
                    Wykorzyst. (%)
                  </HeadCell>
                  <HeadCell>Weryfikacja</HeadCell>
                </TRow>
                {verRows.map(r => (
                  <TRow key={r.a} $cols={verCols} $h={27.500} $bg={r.bg}>
                    <TCell>{r.a}</TCell>
                    <TCell $right>{r.b}</TCell>
                    <TCell>{verText}</TCell>
                  </TRow>
                ))}
              </TableGrid>
              <ScrollTrack><ScrollThumb $l={11} $t={23} $h={21} /></ScrollTrack>
            </TableBox>
            <ActionBar>
              <Action $gap={3}><IconShare />Udostępnij</Action>
              <Action $ml={14} $gap={6}><IconExport />Eksportuj <svg width="7" height="4" viewBox="0 0 7 4"><path d="M0 0h7L3.500 4z" fill="#888" /></svg></Action>
              <Action $ml={7} $gap={9}><IconPrint />Podgląd strony</Action>
              <Action $ml={10} $gap={0}><Settings size={24} color="#444" strokeWidth={1.3} /></Action>
            </ActionBar>
            <Report>
              <ReportInner>
                <GreenBar>Nośność na rozciąganie (PN EN 1993-1-8:2006/NA:2011, 3.6)</GreenBar>
                <Message>Maksymalne naprężenie powstaje dla przypadku obciążenia LC1.</Message>
                <FormulaRow $h={30} $pl={40}>
                  <Inline>F<Sub>t,Ed</Sub>&nbsp;≤ min(F<Sub>t,Rd</Sub>, B<Sub>p,Rd</Sub>)</Inline>
                  <BoldResult>101.90 kN ≤ 113.04 kN <SmallCheck /></BoldResult>
                </FormulaRow>
                <FormulaRow $h={56} $mt={-3} $pl={40}>
                  <Inline>F<Sub>t,Rd</Sub>=<Fraction><Numer>0.9f<Sub>ub</Sub>&nbsp;&nbsp;A<Sub>s</Sub></Numer><Denom>γ<Sub>M2</Sub></Denom></Fraction></Inline>
                  <Inline $pt={12}><QtyName>F<Sub>t,Rd</Sub></QtyName>:<QtyValue>113.04</QtyValue>kN</Inline>
                </FormulaRow>
                <FormulaRow $h={26} $mt={15} $pl={77}>
                  <Description><b>A<Sub>s</Sub></b>: Pole przekroju czynnego przy rozciąganiu</Description>
                  <Inline><QtyName>A<Sub>s</Sub></QtyName>:<QtyValue>157.00</QtyValue>mm²</Inline>
                </FormulaRow>
              </ReportInner>
              <ScrollTrack $w={20}><ScrollThumb $l={9} $t={21} $h={22} /></ScrollTrack>
            </Report>
          </Panel>
        </RightPane>
      </Main>
      <Bottom><OkButton>Akceptuj</OkButton></Bottom>
    </Page>
  );
}
